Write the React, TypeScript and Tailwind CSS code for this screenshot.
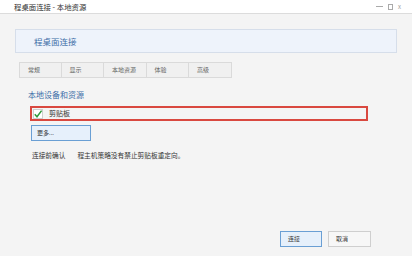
const cjk = { fontFamily: '"Noto Sans CJK SC", "Noto Sans", sans-serif' }

const tabs = ['常规', '显示', '本地资源', '体验', '高级']

export default function App() {
  return (
    <div className="flex h-[256px] w-[412px] flex-col overflow-hidden bg-[#f4f4f4] text-[#333]" style={cjk}>
      <div className="flex h-[14px] shrink-0 items-center border-b border-[#dcdcdc] bg-white pl-[14px] pr-[11px]">
        <span className="text-[7.4px] leading-none text-[#333]">程桌面连接 - 本地资源</span>
        <div className="ml-auto flex items-center gap-[5px] text-[#999]">
          <span className="block h-px w-[7px] bg-[#aaa]" />
          <span className="block h-[6px] w-[5px] border border-[#aaa]" />
          <span className="text-[6px] leading-none">x</span>
        </div>
      </div>

      <div className="flex flex-1 flex-col px-[15px]">
        <div className="mt-[15px] flex h-[24px] items-center border border-[#d6deea] bg-[#eef3fb] pl-[18px]">
          <span className="text-[8.5px] leading-none text-[#3d6ea8]">程桌面连接</span>
        </div>

        <div className="ml-[4px] mt-[9px] flex">
          {tabs.map((t, i) => (
            <div key={t} className={`flex h-[16px] w-[42.5px] items-center border border-[#dadada] bg-[#f0f0f0] pl-[8px] ${i > 0 ? 'border-l-0' : ''}`}>
              <span className="text-[6px] leading-none text-[#666]">{t}</span>
            </div>
          ))}
        </div>

        <div className="ml-[13px] mt-[13px] text-[8px] leading-none text-[#3d6ea8]">本地设备和资源</div>

        <div className="ml-[15px] mt-[7px] flex h-[15px] w-[338px] items-center border-2 border-[#d9483f] pl-[1px]">
          <svg width="10" height="10" viewBox="0 0 10 10" className="shrink-0">
            <rect x="0.5" y="0.5" width="9" height="9" fill="#fff" stroke="#cfcfcf" />
            <path d="M1.8 5.2 L4 7.8 L8.6 1.6" fill="none" stroke="#2e9a3c" strokeWidth="1.5" />
          </svg>
          <span className="ml-[6px] text-[7px] leading-none text-[#333]">剪贴板</span>
        </div>

        <div className="ml-[16px] mt-[4px] flex h-[16px] w-[60px] items-center border border-[#6a9fd4] bg-[#e6f0fb] pl-[5px]">
          <span className="text-[6px] leading-none text-[#333]">更多...</span>
        </div>

        <div className="ml-[17px] mt-[11px] flex text-[6.7px] leading-none text-[#333]">
          <span>连接前确认</span>
          <span className="ml-[12px]">程主机策略没有禁止剪贴板重定向。</span>
        </div>

        <div className="mb-[9px] mr-[26px] mt-auto flex justify-end gap-[6px]">
          <div className="flex h-[16px] w-[42px] items-center border border-[#6a9fd4] bg-[#e6f0fb] pl-[7px]">
            <span className="text-[6px] leading-none text-[#333]">连接</span>
          </div>
          <div className="flex h-[16px] w-[43px] items-center border border-[#cfcfcf] bg-[#f7f7f7] pl-[7px]">
            <span className="text-[6px] leading-none text-[#333]">取消</span>
          </div>
        </div>
      </div>
    </div>
  )
}
